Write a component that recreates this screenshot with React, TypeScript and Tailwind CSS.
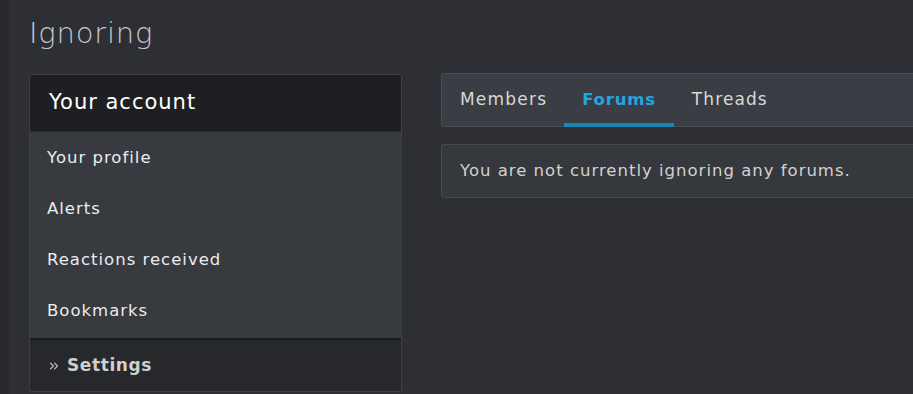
import { ChevronsRight } from "lucide-react";

const font = { fontFamily: '"DejaVu Sans", "Noto Sans", sans-serif' };

const menuItems = ["Your profile", "Alerts", "Reactions received", "Bookmarks"];

const Sidebar = () => (
  <div className="w-[373px] shrink-0 overflow-hidden rounded-t-[3px] border border-[#3d3f44] bg-[#373a3f]">
    <div className="flex h-[57px] items-center border-b border-[#2a2b2f] bg-[#1e1f22] px-[19px] text-[21px] tracking-[1px] text-white">
      Your account
    </div>
    <div className="pt-[1px] pb-[1px]">
      {menuItems.map((item) => (
        <div
          key={item}
          className="flex h-[51px] items-center px-[17px] text-[16.5px] tracking-[1px] text-[#ececec]"
        >
          {item}
        </div>
      ))}
    </div>
    <div className="flex h-[53px] items-center gap-[6px] border-t-2 border-[#1c1d20] bg-[#26282c] px-[17px] text-[17px] font-bold tracking-[0.6px] text-[#cfcfcf]">
      <ChevronsRight size={14} strokeWidth={2} className="text-[#c8c8c8]" />
      <span>Settings</span>
    </div>
  </div>
);

const Tabs = () => (
  <div className="flex h-[54px] items-stretch rounded-[3px] border border-[#4a4d53] bg-[#3a3d43] px-[1px]">
    <div className="flex items-center px-[17px] text-[17px] tracking-[1.2px] text-[#d8d8d8]">
      Members
    </div>
    <div className="relative flex items-center px-[18px] text-[16.5px] font-bold tracking-[0.8px] text-[#22a7e0]">
      Forums
      <div className="absolute bottom-[-1px] left-0 right-0 h-[4px] bg-[#1887b3]" />
    </div>
    <div className="flex items-center px-[18px] text-[17px] tracking-[1.1px] text-[#d8d8d8]">
      Threads
    </div>
  </div>
);

export default function App() {
  return (
    <div
      className="flex h-[394px] w-[913px] overflow-hidden bg-[#2e2f34]"
      style={font}
    >
      <div className="w-[9px] shrink-0 bg-[#28292d]" />
      <div className="flex-1 pl-[20px]">
        <h1 className="pt-[13px] text-[29px] font-extralight leading-[40px] tracking-[0.8px] text-[#c3c7cc]">
          Ignoring
        </h1>
        <div className="mt-[21px] flex gap-[39px]">
          <Sidebar />
          <div className="w-[560px] shrink-0 -mt-[1px]">
            <Tabs />
            <div className="mt-[17px] flex h-[54px] items-center rounded-[3px] border border-[#46494e] bg-[#35383d] px-[18px] text-[16.5px] tracking-[1px] text-[#d2d2d2]">
              You are not currently ignoring any forums.
            </div>
          </div>
        </div>
      </div>
    </div>
  );
}
